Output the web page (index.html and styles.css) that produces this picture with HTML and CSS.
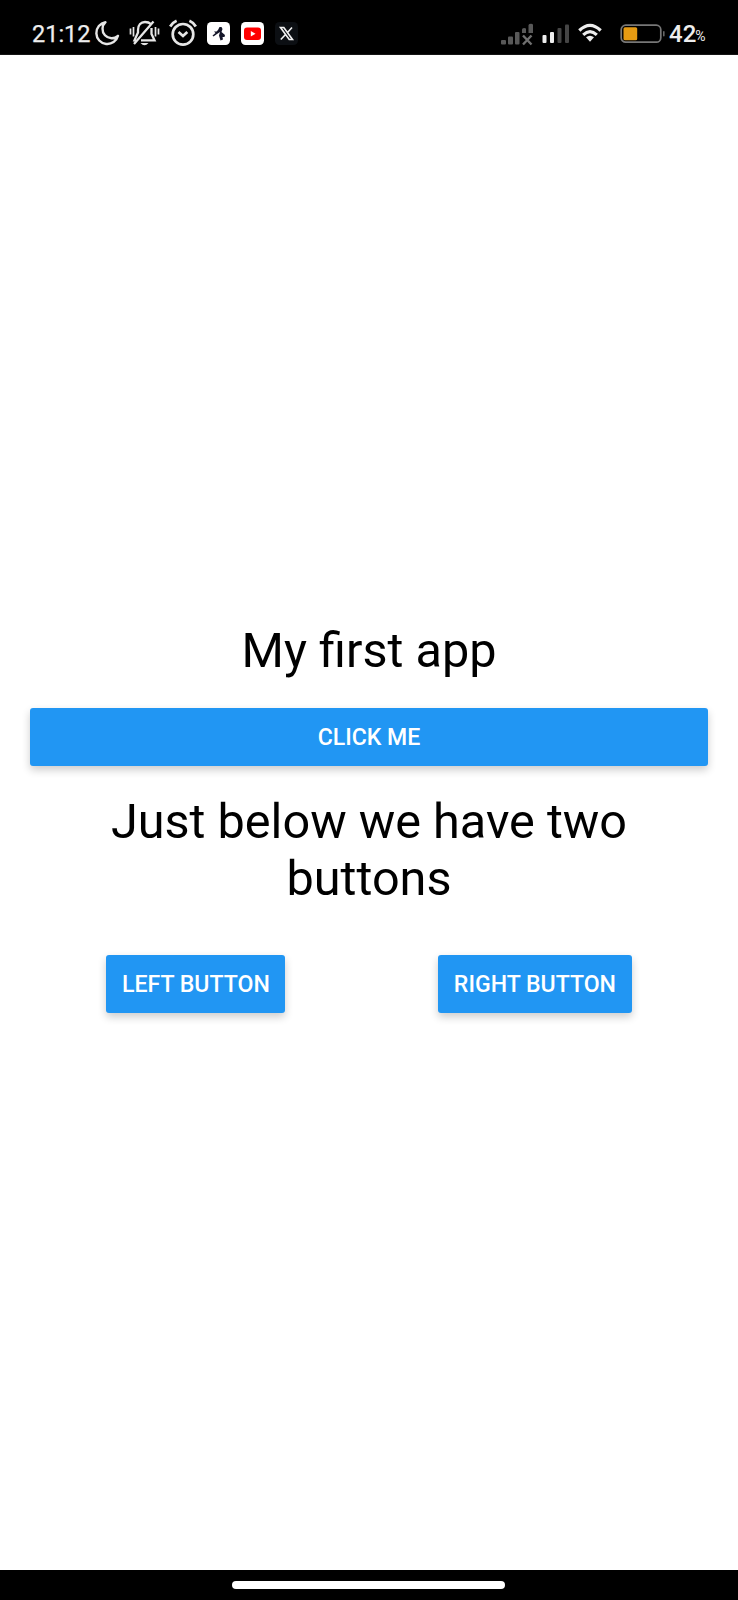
FILE: index.html
```html
<!DOCTYPE html>
<html lang="en">
<head>
<meta charset="utf-8">
<title>My first app</title>
<link rel="stylesheet" href="styles.css">
</head>
<body>
<div class="screen">
  <header class="status">
    <div class="status-left">
      <span class="time">21:12</span>
      <svg class="moon" width="26" height="26" viewBox="0 0 26 26" fill="none" stroke="#e6e6e6" stroke-width="2.400" stroke-linejoin="round"><path d="M10.500 2.200A11 11 0 1 0 23 15.800A8.800 8.800 0 0 1 10.500 2.200Z"/></svg>
      <svg class="bell" width="32" height="28" viewBox="0 0 32 28" fill="none" stroke="#e6e6e6" stroke-width="2.300"><path d="M9 14V11C9 6 12 3 16 3C18.500 3 20.500 3.700 22 5M22.500 9V15L25.500 21.300H12M9 13.500L5.500 21.300H7M5 25L24.500 2.500"/><path d="M1.500 9.500V15.500M4.500 8V17.500M26.500 8V17.500M29.500 9.500V15.500" stroke-width="1.700"/><path d="M11.500 24H19.500Q15.500 28.500 11.500 24Z" fill="#e6e6e6" stroke="none"/></svg>
      <svg class="alarm" width="28" height="28" viewBox="0 0 28 28" fill="none" stroke="#e6e6e6" stroke-width="2.700"><circle cx="14" cy="15.300" r="10.300"/><path d="M9.500 13L14 17L18.300 13M1.200 7.500Q3.300 3.500 7.600 1.700M26.800 7.500Q24.700 3.500 20.400 1.700"/></svg>
      <svg class="app-icon" width="23" height="23" viewBox="0 0 23 23"><rect width="23" height="23" rx="4.500" fill="#fff"/><path d="M11 8L12.500 5H14.500L15.500 7L14.500 10L18 13L17.500 15H15.500L16 17.500L13.500 18.500L12 13.500L13 10L10 12L6.500 14.500L5.500 13.500L8.500 11L7 9.500L9.500 9.500Z" fill="#141629"/></svg>
      <svg class="app-icon" width="23" height="23" viewBox="0 0 23 23"><rect width="23" height="23" rx="4.500" fill="#fff"/><rect x="3" y="5.500" width="17" height="12.500" rx="3" fill="#f00"/><path d="M9.800 9L14.500 11.700L9.800 14.400Z" fill="#fff"/></svg>
      <svg class="app-icon" width="23" height="23" viewBox="0 0 23 23"><rect width="23" height="23" rx="4.500" fill="#0c0f13"/><path d="M5.500 5.500H8.800L17.500 17.500H14.200ZM17 5.500L12.300 10.700M10.500 12.500L5.800 17.500" fill="none" stroke="#f2f2f2" stroke-width="1.600"/></svg>
    </div>
    <div class="status-right">
      <svg class="no-signal" width="34" height="23" viewBox="0 0 34 23" fill="#585858"><rect x="1" y="17" width="5" height="4.500" rx="1"/><rect x="8" y="13.500" width="5" height="8" rx="1"/><rect x="15" y="9" width="4.500" height="12.500" rx="1"/><path d="M22 6.500Q22 5 24 5T26 6V10H22ZM28.500 2Q29 .8 31 .8T33 2V10H28.500Z"/><path d="M23 12.500L31.500 21.500M31.500 12.500L23 21.500" stroke="#707070" stroke-width="2.400"/></svg>
      <svg class="signal" width="28" height="20" viewBox="0 0 28 20"><rect x=".5" y="11" width="4" height="8" rx="1" fill="#eee"/><rect x="8" y="8" width="4" height="11" rx="1" fill="#eee"/><rect x="15.500" y="4" width="4" height="15" rx="1" fill="#454545"/><rect x="23" y=".5" width="4" height="18.500" rx="1" fill="#454545"/></svg>
      <svg class="wifi" width="24" height="20" viewBox="0 0 24 20" fill="none" stroke="#ececec" stroke-width="3.200"><path d="M1.300 7.500Q12-2.800 22.700 7.500M5.200 11.800Q12 5.500 18.800 11.800"/><path d="M8 14.300Q12 11.300 16 14.300L12 18.800Z" fill="#ececec" stroke="none"/></svg>
      <svg class="battery" width="46" height="20" viewBox="0 0 46 20"><rect x="1.200" y="1.200" width="39.600" height="17" rx="4.500" fill="none" stroke="#777" stroke-width="1.700"/><rect x="3.500" y="3.200" width="13.700" height="13" rx="1.500" fill="#e59a12"/><rect x="43" y="7" width="1.600" height="5.500" rx=".8" fill="#666"/></svg>
      <span class="level">42</span><span class="percent">%</span>
    </div>
  </header>
  <main class="content">
    <p class="text">My first app</p>
    <button class="button wide">CLICK ME</button>
    <p class="text two">Just below we have two buttons</p>
    <div class="row">
      <button class="button left">LEFT BUTTON</button>
      <button class="button right">RIGHT BUTTON</button>
    </div>
  </main>
  <footer class="nav"><div class="handle"></div></footer>
</div>
</body>
</html>
```
FILE: styles.css
```css
* { box-sizing: border-box; }
body { margin: 0; background: #fff; font-family: Roboto, "Liberation Sans", sans-serif; }
.screen { width: 738px; height: 1600px; display: flex; flex-direction: column; }
.status { height: 55px; background: #000; color: #eee; display: flex; justify-content: space-between; padding: 10px 32px 0 32px; border-bottom: 1px solid #151515; }
.status svg { flex: none; display: block; }
.status-left, .status-right { display: flex; align-items: flex-start; }
.time { width: 63px; font-size: 23.500px; line-height: 28px; -webkit-text-stroke: .25px #eee; padding-top: 10px; white-space: nowrap; }
.moon { margin-top: 10px; }
.bell { margin: 9px 0 0 8px; }
.alarm { margin: 9px 0 0 8px; }
.app-icon { margin: 12px 0 0 11px; }
.alarm + .app-icon { margin-left: 10px; }
.status-right { width: 206px; padding-top: 14px; }
.no-signal { margin-top: -1px; }
.signal { margin: 0 0 0 8px; }
.wifi { margin: -1px 0 0 8px; }
.battery { margin: 0 0 0 18px; }
.level { font-size: 24px; font-weight: 500; line-height: 28px; margin: -4px 0 0 3px; }
.percent { font-size: 14px; line-height: 14px; margin: 5px 0 0 -1px; }
.content { flex: 1; display: flex; flex-direction: column; justify-content: center; padding: 10px 30px 0; }
.text { margin: 0; font-size: 48.600px; line-height: 57px; text-align: center; color: #000; }
.button { font: 500 23.100px/28px Roboto, "Liberation Sans", sans-serif; height: 58px; padding: 1px 0 0; border: 0; border-radius: 3px; background: #2196f3; color: #fff; box-shadow: 0 4px 9px rgba(0,0,0,.2); white-space: nowrap; }
.wide { margin: 29px 0 27px; }
.two { padding: 0 60px; }
.row { display: flex; justify-content: space-around; margin-top: 48px; }
.left { width: 179px; }
.right { width: 193.300px; }
.nav { height: 30px; background: #000; display: flex; justify-content: center; padding: 11px 1px 0 0; }
.handle { width: 273px; height: 8px; border-radius: 4px; background: #fff; }
```
